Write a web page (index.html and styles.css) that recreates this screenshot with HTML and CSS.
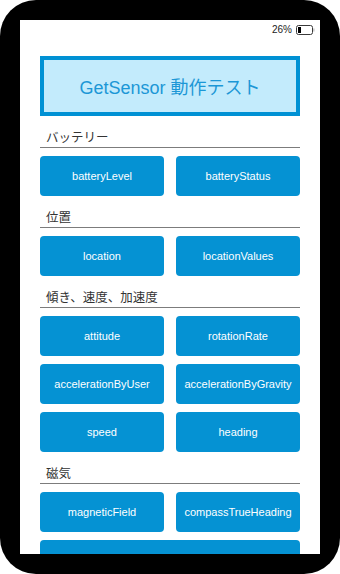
FILE: index.html
```html
<!DOCTYPE html>
<html lang="ja">
<head>
<meta charset="utf-8">
<title>GetSensor 動作テスト</title>
<link rel="stylesheet" href="styles.css">
</head>
<body>
<div class="phone">
  <div class="screen">
    <div class="statusbar">
      <span class="battery-text">26%</span>
      <svg class="battery" width="19" height="10" viewBox="0 0 19 10">
        <rect x="0.5" y="0.5" width="16" height="9" rx="2" ry="2" fill="none" stroke="#3a3a3a" stroke-width="1"/>
        <rect x="2" y="2" width="3" height="6" fill="#000"/>
        <rect x="17.3" y="3.5" width="1.2" height="3" fill="#bbb"/>
      </svg>
    </div>
    <div class="content">
      <div class="title-box">GetSensor 動作テスト</div>

      <div class="section-title">バッテリー</div>
      <div class="btn-grid">
        <div class="btn">batteryLevel</div>
        <div class="btn">batteryStatus</div>
      </div>

      <div class="section-title">位置</div>
      <div class="btn-grid">
        <div class="btn">location</div>
        <div class="btn">locationValues</div>
      </div>

      <div class="section-title">傾き、速度、加速度</div>
      <div class="btn-grid">
        <div class="btn">attitude</div>
        <div class="btn">rotationRate</div>
        <div class="btn">accelerationByUser</div>
        <div class="btn">accelerationByGravity</div>
        <div class="btn">speed</div>
        <div class="btn">heading</div>
      </div>

      <div class="section-title">磁気</div>
      <div class="btn-grid">
        <div class="btn">magneticField</div>
        <div class="btn">compassTrueHeading</div>
        <div class="btn wide"></div>
      </div>
    </div>
  </div>
</div>
</body>
</html>
```
FILE: styles.css
```css
html, body {
  margin: 0;
  padding: 0;
  background: #ffffff;
}

.phone {
  width: 340px;
  height: 574px;
  background: #000000;
  border-radius: 36px;
  padding: 20px;
  box-sizing: border-box;
}

.screen {
  width: 300px;
  height: 534px;
  background: #ffffff;
  overflow: hidden;
}

.statusbar {
  height: 16px;
  display: flex;
  justify-content: flex-end;
  align-items: flex-end;
  gap: 4px;
  padding-right: 5px;
  font-family: "Liberation Sans", Arial, sans-serif;
  font-size: 10px;
  color: #222;
}

.battery-text {
  line-height: 12px;
}

.battery {
  display: block;
  margin-bottom: 1px;
}

.content {
  padding: 20px 20px 0;
}

.title-box {
  height: 60px;
  box-sizing: border-box;
  border: 4px solid #0091d4;
  background: #c3ebfc;
  color: #1c97d6;
  font-family: "Liberation Sans", "Noto Sans CJK JP", sans-serif;
  font-size: 18px;
  display: flex;
  align-items: center;
  justify-content: center;
}

.section-title {
  height: 32px;
  box-sizing: border-box;
  border-bottom: 1px solid #7c7c7c;
  display: flex;
  align-items: flex-end;
  padding-left: 6px;
  padding-bottom: 2px;
  font-family: "Noto Sans CJK JP", sans-serif;
  font-size: 12.5px;
  line-height: 16px;
  color: #333;
}

.btn-grid {
  display: grid;
  grid-template-columns: 1fr 1fr;
  column-gap: 12px;
  row-gap: 8px;
  margin-top: 8px;
}

.btn {
  height: 40px;
  background: #0592d3;
  border-radius: 4px;
  color: #ffffff;
  font-family: "Liberation Sans", Arial, sans-serif;
  font-size: 11px;
  display: flex;
  align-items: center;
  justify-content: center;
  white-space: nowrap;
}

.btn.wide {
  grid-column: 1 / 3;
}
```
